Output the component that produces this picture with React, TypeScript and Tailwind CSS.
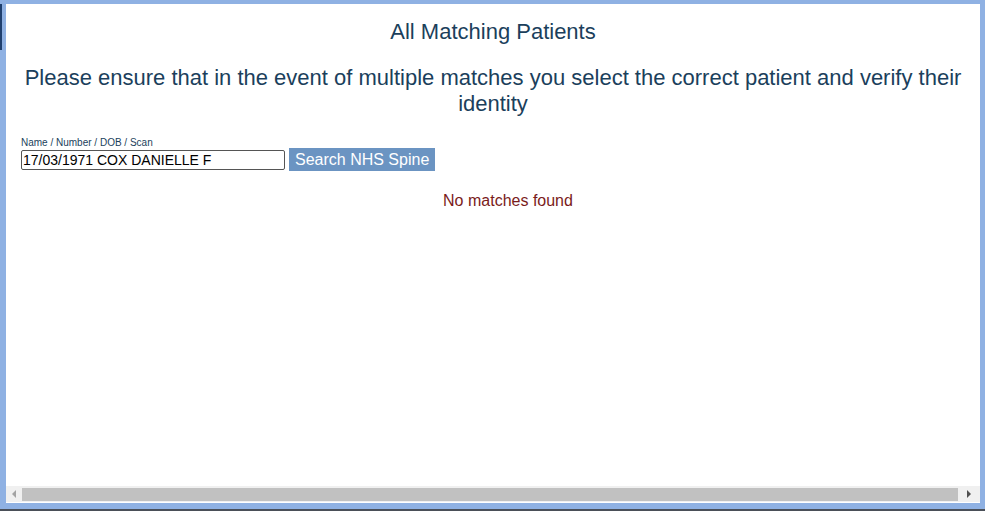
import * as React from 'react';

export default function App() {
    return (
        <div className="w-[985px] h-[511px] overflow-hidden bg-[#8fb1e3] flex flex-col font-['Liberation_Sans',Arial,sans-serif]">
            <div className="flex flex-1 min-h-0 pt-[4px] pr-[5px]">
                <div className="w-[6px] flex flex-col">
                    <div className="h-[46px] w-[2px] bg-[#1f3f6e]" />
                </div>
                <div className="flex-1 flex flex-col bg-white">
                    <div className="flex-1 flex flex-col">
                        <h1 className="text-center text-[22px] leading-[26px] text-[#1b3f5c] mt-[15px]">All Matching Patients</h1>
                        <p className="text-center text-[22px] leading-[26px] text-[#1b3f5c] mt-[20px] px-[14px]">
                            Please ensure that in the event of multiple matches you select the correct patient and verify their identity
                        </p>
                        <div className="mt-[20px] pl-[15px]">
                            <div className="text-[10px] leading-[11px] text-[#1b3f5c]">Name / Number / DOB / Scan</div>
                            <div className="flex items-center gap-[4px]">
                                <div className="w-[264px] h-[20px] border border-[#555] rounded-[2px] text-[14px] leading-[18px] text-black pl-[1px]">
                                    17/03/1971 COX DANIELLE F
                                </div>
                                <div className="h-[23px] px-[6px] bg-[#6b94c2] text-white text-[16px] leading-[23px]">Search NHS Spine</div>
                            </div>
                        </div>
                        <div className="text-center text-[16px] leading-[20px] text-[#7a1b1b] mt-[20px] pl-[30px]">No matches found</div>
                    </div>
                    <div className="h-[16px] bg-[#f0f0f0] flex items-center mb-[1px]">
                        <div className="w-[16px] flex justify-center">
                            <svg width="5" height="8" viewBox="0 0 5 8"><path d="M4 0 L0 4 L4 8 Z" fill="#a3a3a3" /></svg>
                        </div>
                        <div className="flex-1 h-[13px] bg-[#c1c1c1]" />
                        <div className="w-[22px] flex justify-center">
                            <svg width="5" height="8" viewBox="0 0 5 8"><path d="M0 0 L4 4 L0 8 Z" fill="#505050" /></svg>
                        </div>
                    </div>
                </div>
            </div>
            <div className="h-[6px]" />
            <div className="h-[2px] bg-[#4a4f58]" />
        </div>
    );
}
